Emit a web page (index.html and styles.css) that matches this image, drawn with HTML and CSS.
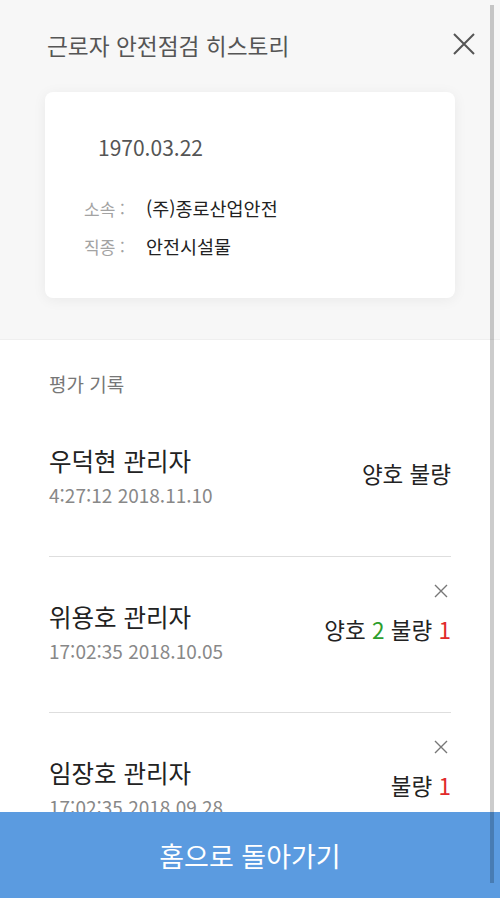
FILE: index.html
```html
<!DOCTYPE html>
<html lang="ko">
<head>
<meta charset="utf-8">
<title>근로자 안전점검 히스토리</title>
<link rel="stylesheet" href="styles.css">
</head>
<body>
<div class="page">
  <section class="top">
    <header class="header">
      <h1 class="title">근로자 안전점검 히스토리</h1>
      <button class="close" aria-label="닫기">
        <svg width="22" height="22" viewBox="0 0 22 22"><path d="M1 1 L21 21 M21 1 L1 21" stroke="#555" stroke-width="2" fill="none"/></svg>
      </button>
    </header>
    <div class="card">
      <div class="birth">1970.03.22</div>
      <div class="info-row first"><span class="label">소속 :</span><span class="value">(주)종로산업안전</span></div>
      <div class="info-row"><span class="label">직종 :</span><span class="value">안전시설물</span></div>
    </div>
  </section>

  <section class="records">
    <div class="records-title">평가 기록</div>

    <div class="item">
      <div class="item-close"></div>
      <div class="item-body">
        <div class="item-left">
          <div class="name">우덕현 관리자</div>
          <div class="time">4:27:12 2018.11.10</div>
        </div>
        <div class="result">양호 불량</div>
      </div>
    </div>

    <div class="item">
      <div class="item-close">
        <svg width="14" height="14" viewBox="0 0 14 14"><path d="M1 1 L13 13 M13 1 L1 13" stroke="#777" stroke-width="1.4" fill="none"/></svg>
      </div>
      <div class="item-body">
        <div class="item-left">
          <div class="name">위용호 관리자</div>
          <div class="time">17:02:35 2018.10.05</div>
        </div>
        <div class="result">양호 <span class="good">2</span> 불량 <span class="bad">1</span></div>
      </div>
    </div>

    <div class="item">
      <div class="item-close">
        <svg width="14" height="14" viewBox="0 0 14 14"><path d="M1 1 L13 13 M13 1 L1 13" stroke="#777" stroke-width="1.4" fill="none"/></svg>
      </div>
      <div class="item-body">
        <div class="item-left">
          <div class="name">임장호 관리자</div>
          <div class="time">17:02:35 2018.09.28</div>
        </div>
        <div class="result">불량 <span class="bad">1</span></div>
      </div>
    </div>
  </section>

  <button class="home">홈으로 돌아가기</button>
  <div class="scrollbar"></div>
</div>
</body>
</html>
```

FILE: styles.css
```css
* { box-sizing: border-box; }

html, body {
  margin: 0;
  padding: 0;
  height: 100%;
  overflow: hidden;
}

body {
  font-family: "Noto Sans CJK KR", "Noto Sans", sans-serif;
  background: #ffffff;
  color: #222;
}

.page {
  position: relative;
  width: 500px;
  height: 898px;
  overflow: hidden;
  background: #fff;
}

.top {
  background: #f7f7f7;
  height: 340px;
  padding: 30px 45px 0 45px;
  border-bottom: 1px solid #efefef;
}

.header {
  display: flex;
  align-items: center;
  justify-content: space-between;
  height: 32px;
}

.title {
  margin: 0 0 0 2px;
  font-size: 22.7px;
  font-weight: 400;
  line-height: 32px;
  color: #555;
}

.close {
  border: 0;
  background: none;
  padding: 0;
  margin-right: -20px;
  width: 22px;
  height: 22px;
  display: flex;
  margin-top: -4px;
}

.card {
  margin-top: 30px;
  background: #fff;
  border-radius: 8px;
  box-shadow: 0 2px 14px rgba(0, 0, 0, 0.06);
  height: 206px;
  padding: 40px 20px 0 39px;
}

.birth {
  padding-left: 14px;
  font-size: 21px;
  line-height: 30px;
  color: #555;
}

.info-row {
  display: flex;
  align-items: center;
  height: 30px;
  margin-top: 8px;
}

.info-row.first {
  margin-top: 31px;
}

.label {
  width: 62px;
  font-size: 17px;
  color: #a3a3a3;
}

.value {
  font-size: 18.5px;
  color: #222;
}

.records {
  padding: 31px 49px 0 49px;
}

.records-title {
  font-size: 19px;
  line-height: 26px;
  color: #777;
  margin-bottom: 4px;
}

.item {
  padding-top: 24px;
  padding-bottom: 47px;
  border-bottom: 1px solid #dedede;
}

.item-close {
  height: 20px;
  display: flex;
  align-items: center;
  justify-content: flex-end;
  padding-right: 3px;
}

.item-body {
  display: flex;
  justify-content: space-between;
  align-items: flex-start;
}

.name {
  font-size: 24.5px;
  line-height: 32px;
  color: #222;
}

.time {
  margin-top: 4px;
  font-size: 19px;
  line-height: 28px;
  color: #888;
}

.result {
  padding-top: 12px;
  font-size: 22.5px;
  line-height: 32px;
  color: #222;
}

.good { color: #2e9e2e; }
.bad { color: #e12a2a; }

.home {
  position: absolute;
  left: 0;
  right: 0;
  bottom: 0;
  height: 86px;
  border: 0;
  background: #5b9be0;
  color: #fff;
  font-family: "Noto Sans CJK KR", "Noto Sans", sans-serif;
  font-size: 27px;
  padding: 0;
}

.scrollbar {
  position: absolute;
  top: 5px;
  right: 6px;
  width: 4px;
  height: 878px;
  background: rgba(0, 0, 0, 0.2);
}
```
